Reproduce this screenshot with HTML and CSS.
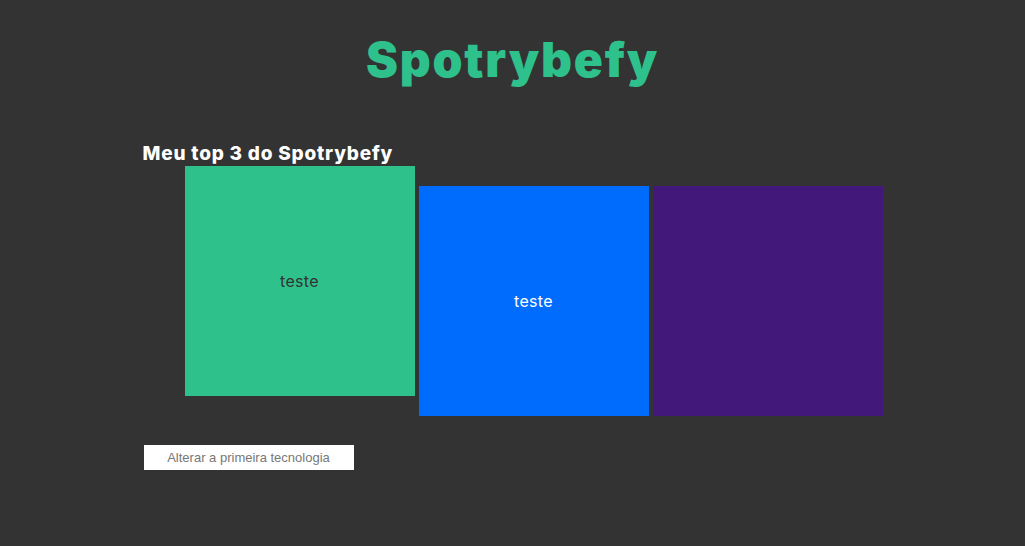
FILE: index.html
```html
<!DOCTYPE html>
<html lang="pt-BR">
<head>
<meta charset="utf-8">
<title>Spotrybefy</title>
<link rel="stylesheet" href="styles.css">
</head>
<body>
  <header class="header">
    <h1 class="title">Spotrybefy</h1>
  </header>
  <main class="main">
    <h2 class="subtitle">Meu top 3 do Spotrybefy</h2>
    <ul class="tracks">
      <li class="track track-green">teste</li>
      <li class="track track-blue">teste</li>
      <li class="track track-purple"></li>
    </ul>
    <button class="btn" type="button">Alterar a primeira tecnologia</button>
  </main>
</body>
</html>
```
FILE: styles.css
```css
* { box-sizing: border-box; }
html, body { margin: 0; padding: 0; }
body {
  background: #333333;
  font-family: "Inter", "Noto Sans", sans-serif;
  height: 546px;
  overflow: hidden;
}
.header {
  display: flex;
  justify-content: center;
  padding-top: 30px;
}
.title {
  margin: 0;
  font-family: "Inter", sans-serif;
  font-weight: 900;
  font-size: 48px;
  line-height: 60px;
  color: #2fc18c;
  letter-spacing: 1.8px;
}
.main {
  width: 740px;
  margin: 0 auto;
  padding-top: 51px;
  display: flex;
  flex-direction: column;
}
.subtitle {
  margin: 0;
  font-family: "Inter", sans-serif;
  font-weight: 800;
  font-size: 19px;
  line-height: 25px;
  color: #ffffff;
  letter-spacing: 0.8px;
}
.tracks {
  list-style: none;
  margin: 0;
  padding: 0 0 0 42px;
  display: flex;
  gap: 4px;
  align-items: flex-start;
}
.track {
  width: 230px;
  height: 230px;
  display: flex;
  align-items: center;
  justify-content: center;
  font-size: 16px;
  font-weight: 400;
  letter-spacing: 0.3px;
  margin-top: 20px;
}
.track-green {
  background: #2fc18c;
  color: #333333;
  margin-top: 0;
}
.track-blue { background: #006cfe; color: #ffffff; }
.track-purple { background: #42187b; }
.btn {
  align-self: flex-start;
  margin: 29px 0 0 1px;
  width: 210px;
  height: 25px;
  border: none;
  background: #ffffff;
  color: #777777;
  font-family: "Liberation Sans", Arial, sans-serif;
  font-size: 13px;
  padding: 0;
}
```
